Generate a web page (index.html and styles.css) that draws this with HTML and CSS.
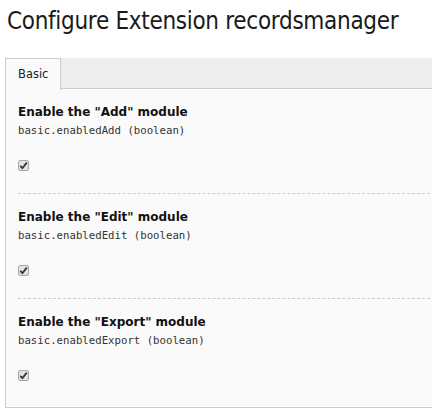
FILE: index.html
```html
<!DOCTYPE html>
<html>
<head>
<meta charset="utf-8">
<link rel="stylesheet" href="styles.css">
</head>
<body>
<h1 class="page-title">Configure Extension recordsmanager</h1>
<div class="tabs">
  <div class="tab-bar">
    <div class="tab active">Basic</div>
  </div>
  <div class="panel">
    <div class="item">
      <div class="item-title">Enable the "Add" module</div>
      <div class="item-key">basic.enabledAdd (boolean)</div>
      <div class="check"><svg viewBox="0 0 11 11" width="11" height="11"><path d="M2.3 5.8 L4.4 8.2 L8.8 2.6" fill="none" stroke="#333" stroke-width="1.8"/></svg></div>
    </div>
    <div class="item">
      <div class="item-title">Enable the "Edit" module</div>
      <div class="item-key">basic.enabledEdit (boolean)</div>
      <div class="check"><svg viewBox="0 0 11 11" width="11" height="11"><path d="M2.3 5.8 L4.4 8.2 L8.8 2.6" fill="none" stroke="#333" stroke-width="1.8"/></svg></div>
    </div>
    <div class="item">
      <div class="item-title">Enable the "Export" module</div>
      <div class="item-key">basic.enabledExport (boolean)</div>
      <div class="check"><svg viewBox="0 0 11 11" width="11" height="11"><path d="M2.3 5.8 L4.4 8.2 L8.8 2.6" fill="none" stroke="#333" stroke-width="1.8"/></svg></div>
    </div>
  </div>
</div>
</body>
</html>
```
FILE: styles.css
```css
html, body {
  margin: 0;
  padding: 0;
  background: #ffffff;
  overflow: hidden;
}
body {
  font-family: "DejaVu Sans", Verdana, sans-serif;
  color: #212121;
}
.page-title {
  font-family: "DejaVu Sans Condensed", "DejaVu Sans", sans-serif;
  font-weight: normal;
  font-size: 24px;
  line-height: 30px;
  margin: 6px 0 22px 7px;
  color: #1a1a1a;
  letter-spacing: -0.3px;
}
.tabs {
  margin-left: 5px;
  margin-right: -20px;
}
.tab-bar {
  display: flex;
  background: #ededed;
  border-bottom: 1px solid #cccccc;
  height: 30px;
}
.tab {
  font-size: 11.5px;
  line-height: 30px;
  padding: 0 12px;
  width: 30px;
  box-sizing: content-box;
  border: 1px solid #cccccc;
  border-bottom: none;
  background: #fafafa;
  color: #222;
  margin-bottom: -1px;
  height: 31px;
}
.panel {
  background: #fafafa;
  border-left: 1px solid #cccccc;
  border-bottom: 1px solid #cccccc;
  padding: 0 12px;
}
.item {
  padding: 14px 0 22px;
  border-bottom: 1px dashed #cccccc;
}
.item:last-child {
  border-bottom: none;
  padding-bottom: 26px;
}
.item-title {
  font-weight: bold;
  font-size: 12px;
  line-height: 18px;
  color: #111;
}
.item-key {
  font-family: "DejaVu Sans Mono", monospace;
  font-size: 10.7px;
  line-height: 16px;
  margin-top: 2px;
  color: #333;
}
.check {
  margin-top: 21px;
  width: 9px;
  height: 9px;
  border: 1px solid #a8a8a8;
  border-radius: 2px;
  background: #e2e2e2;
  position: relative;
}
.check svg {
  position: absolute;
  left: -1px;
  top: -1px;
}
```
